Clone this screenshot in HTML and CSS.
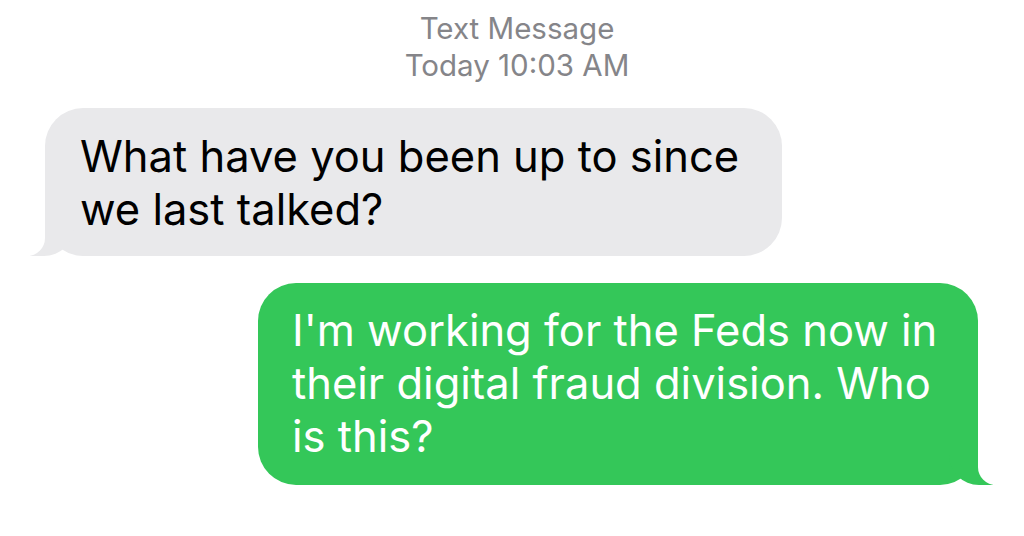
FILE: index.html
```html
<!DOCTYPE html>
<html lang="en">
  <head>
    <meta charset="UTF-8" />
    <meta name="viewport" content="width=device-width, initial-scale=1.0" />
    <title>Text Message</title>
    <link rel="stylesheet" href="styles.css">
  </head>
  <body>
    <div class="thread">
      <div class="stamp">
        <p>Text Message</p>
        <p>Today 10:03 AM</p>
      </div>

      <div class="bubble incoming">
        What have you been up to since we last talked?
      </div>

      <div class="bubble outgoing">
        I'm working for the Feds now in their digital fraud division. Who is this?
      </div>

      <div class="stamp next">
        <p>Today 10:05 AM</p>
      </div>
    </div>
  </body>
</html>
```

FILE: styles.css
```css
body {
  margin: 0;
  background-color: #fff;
  font-family: Inter, "Noto Sans", sans-serif;
  overflow: hidden;
}

.thread {
  width: 1024px;
  height: 536px;
  display: flex;
  flex-direction: column;
  box-sizing: border-box;
  padding-top: 10px;
  overflow: hidden;
}

.stamp {
  text-align: center;
  color: #858589;
  font-size: 29.5px;
  line-height: 37px;
  padding-left: 10px;
}

.stamp p {
  margin: 0;
}

.stamp.next {
  margin-top: 45px;
  color: #c8c8cb;
}

.bubble {
  position: relative;
  box-sizing: border-box;
  font-size: 43.5px;
  line-height: 53px;
  border-radius: 38px;
}

.incoming {
  margin: 24px 0 0 45px;
  width: 737px;
  padding: 22px 30px 20px 35px;
  background-color: #e9e9eb;
  color: #000;
}

.outgoing {
  align-self: flex-end;
  margin: 27px 46px 0 0;
  width: 720px;
  padding: 21px 30px 22px 34px;
  background-color: #34c759;
  color: #fff;
}

/* tails */
.bubble::before,
.bubble::after {
  content: "";
  position: absolute;
  bottom: 0;
  height: 40px;
}

.incoming::before {
  left: -15px;
  width: 44px;
  background-color: #e9e9eb;
  border-bottom-right-radius: 30px;
}

.incoming::after {
  left: -24px;
  width: 24px;
  background-color: #fff;
  border-bottom-right-radius: 18px;
}

.outgoing::before {
  right: -15px;
  width: 44px;
  background-color: #34c759;
  border-bottom-left-radius: 30px;
}

.outgoing::after {
  right: -24px;
  width: 24px;
  background-color: #fff;
  border-bottom-left-radius: 18px;
}
```
